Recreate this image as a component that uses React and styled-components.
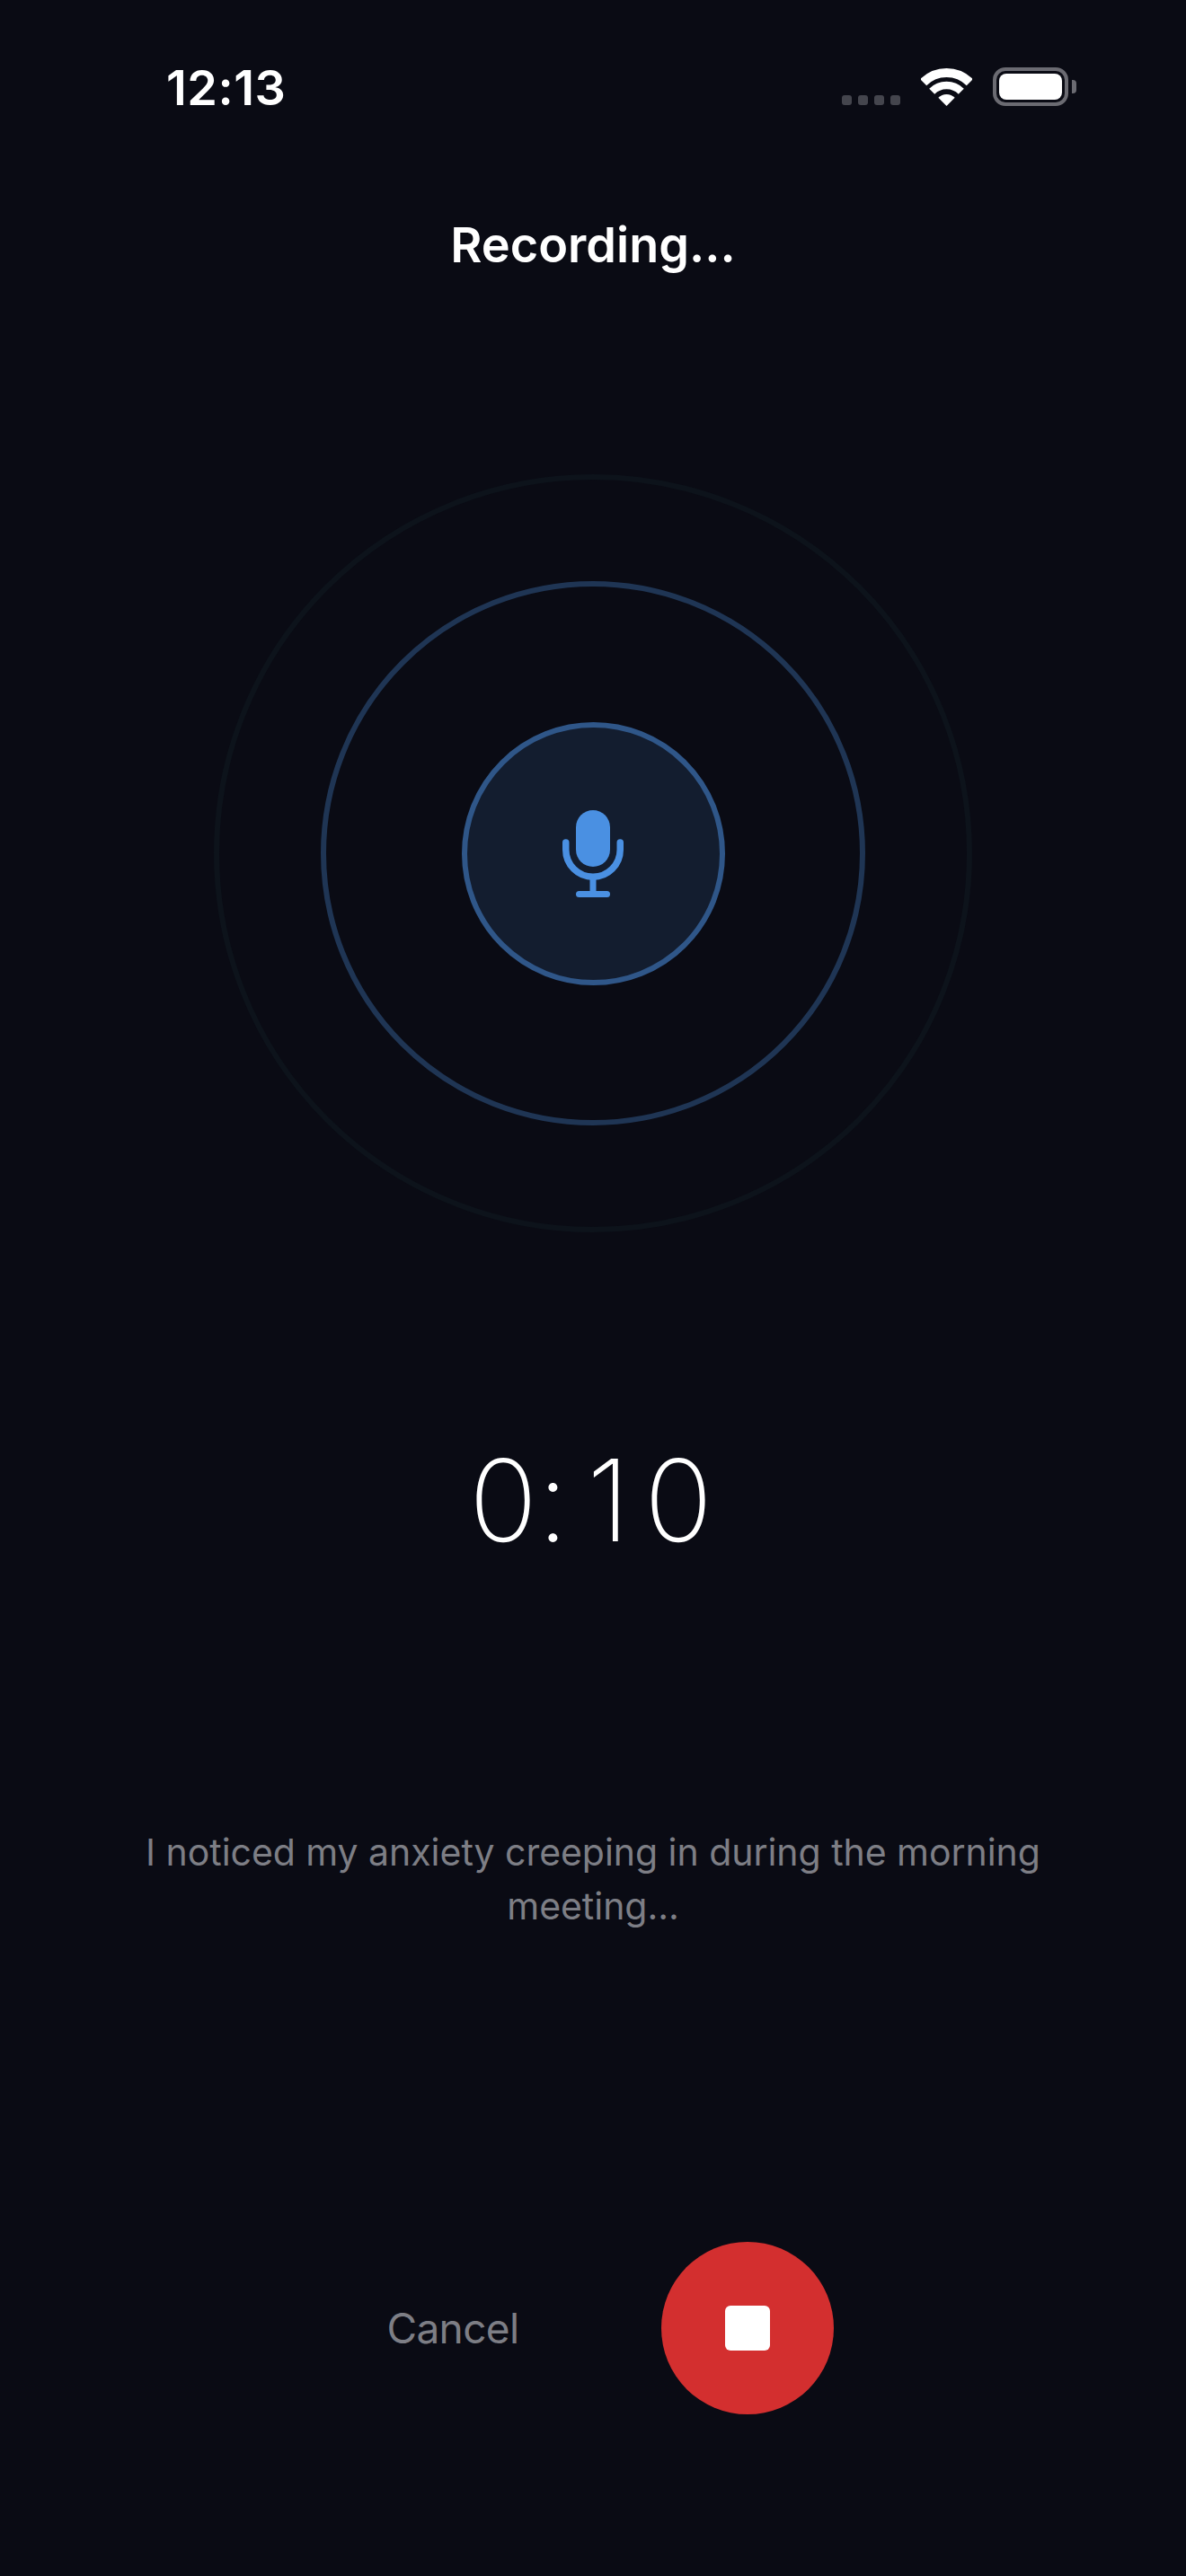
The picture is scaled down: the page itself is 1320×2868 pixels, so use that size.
import React from "react";
import styled, { createGlobalStyle } from "styled-components";

const Global = createGlobalStyle`
  html, body {
    margin: 0;
    padding: 0;
    background: #0a0b14;
  }
  * {
    box-sizing: border-box;
  }
`;

const Page = styled.div`
  width: 1320px;
  height: 2868px;
  background: #0a0b14;
  font-family: Inter, "Liberation Sans", sans-serif;
  display: flex;
  flex-direction: column;
  align-items: center;
  overflow: hidden;
`;

const StatusBar = styled.div`
  width: 100%;
  height: 130px;
  padding: 66px 131px 0 185px;
  display: flex;
  justify-content: space-between;
  align-items: flex-start;
`;

const Clock = styled.div`
  color: #fff;
  font-size: 54px;
  font-weight: 600;
  line-height: 64px;
  letter-spacing: 0.5px;
`;

const StatusIcons = styled.div`
  display: flex;
  align-items: flex-end;
  margin-top: 9px;
`;

const Dots = styled.div`
  display: flex;
  gap: 7px;
  margin-right: 23px;
  margin-bottom: 1px;
`;

const Dot = styled.span`
  width: 11px;
  height: 11px;
  border-radius: 3px;
  background: #44454d;
`;

const Battery = styled.div`
  width: 84px;
  height: 43px;
  margin-left: 23px;
  padding: 3px;
  border: 4px solid #6b6b72;
  border-radius: 14px;
  position: relative;
  &::after {
    content: "";
    position: absolute;
    right: -13px;
    top: 10px;
    width: 5px;
    height: 15px;
    border-radius: 0 4px 4px 0;
    background: #6b6b72;
  }
`;

const BatteryFill = styled.div`
  width: 100%;
  height: 100%;
  border-radius: 8px;
  background: #fff;
`;

const Title = styled.h1`
  margin: 111px 0 0;
  color: #fff;
  font-size: 54px;
  font-weight: 600;
  line-height: 64px;
`;

const Ring = styled.div`
  width: ${(p) => p.$size}px;
  height: ${(p) => p.$size}px;
  border-radius: 50%;
  border: 6px solid ${(p) => p.$line};
  background: ${(p) => p.$fill || "transparent"};
  display: flex;
  align-items: center;
  justify-content: center;
  flex: none;
`;

const Rings = styled.div`
  margin-top: 223px;
`;

const Timer = styled.div`
  margin-top: 222px;
  padding-left: 5px;
  color: #fff;
  font-size: 126px;
  font-weight: 150;
  line-height: 152px;
`;

const TimerPart = styled.span`
  letter-spacing: ${(p) => p.$spacing}px;
`;

const Transcript = styled.p`
  margin: 286px 0 0;
  width: 1040px;
  text-align: center;
  color: #7d7e85;
  font-size: 41px;
  font-weight: 400;
  line-height: 60px;
  letter-spacing: -0.04px;
`;

const Controls = styled.div`
  margin-top: 344px;
  display: flex;
  align-items: center;
  gap: 120px;
`;

const Cancel = styled.button`
  padding: 0 38px;
  border: none;
  background: none;
  color: #7d7e85;
  font-family: inherit;
  font-size: 46px;
  font-weight: 400;
  line-height: 60px;
  letter-spacing: -0.6px;
`;

const StopButton = styled.button`
  width: 192px;
  height: 192px;
  padding: 0;
  border: none;
  border-radius: 50%;
  background: #d32f2f;
  display: flex;
  align-items: center;
  justify-content: center;
`;

const StopSquare = styled.span`
  width: 50px;
  height: 50px;
  border-radius: 6px;
  background: #fff;
`;

const Wifi = () => (
  <svg width="57" height="42" viewBox="0 0 57 42" fill="none">
    <path d="M2.7 15.7a36.5 36.5 0 0 1 51.6 0" stroke="#fff" strokeWidth="10" />
    <path d="M12.2 25.7a23 23 0 0 1 32.6 0" stroke="#fff" strokeWidth="8.5" />
    <path d="M19.3 32.8a13 13 0 0 1 18.4 0L28.5 42z" fill="#fff" />
  </svg>
);

const Mic = () => (
  <svg width="68" height="98" viewBox="0 0 68 98" fill="none">
    <rect x="15" y="1" width="38" height="63" rx="19" fill="#4a90e2" />
    <path
      d="M3.75 37v8a30.25 30.25 0 0 0 60.5 0v-8"
      stroke="#4a90e2"
      strokeWidth="7.5"
      strokeLinecap="round"
    />
    <path d="M34 76v18" stroke="#4a90e2" strokeWidth="7" />
    <path d="M18.5 94.5h31" stroke="#4a90e2" strokeWidth="7" strokeLinecap="round" />
  </svg>
);

export default function App() {
  return (
    <Page>
      <Global />
      <StatusBar>
        <Clock>12:13</Clock>
        <StatusIcons>
          <Dots>
            <Dot />
            <Dot />
            <Dot />
            <Dot />
          </Dots>
          <Wifi />
          <Battery>
            <BatteryFill />
          </Battery>
        </StatusIcons>
      </StatusBar>
      <Title>Recording...</Title>
      <Rings>
        <Ring $size={844} $line="#0d131b">
          <Ring $size={606} $line="#1f3554">
            <Ring $size={293} $line="#2f5688" $fill="#131d2f">
              <Mic />
            </Ring>
          </Ring>
        </Ring>
      </Rings>
      <Timer>
        <TimerPart $spacing={0}>0</TimerPart>
        <TimerPart $spacing={20}>:</TimerPart>
        <TimerPart $spacing={16}>1</TimerPart>
        <TimerPart $spacing={10}>0</TimerPart>
      </Timer>
      <Transcript>I noticed my anxiety creeping in during the morning meeting...</Transcript>
      <Controls>
        <Cancel>Cancel</Cancel>
        <StopButton>
          <StopSquare />
        </StopButton>
      </Controls>
    </Page>
  );
}
